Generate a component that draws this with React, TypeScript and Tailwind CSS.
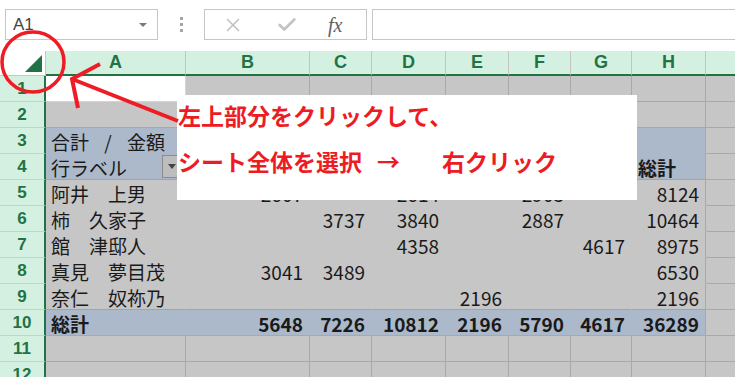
import { Check, X } from "lucide-react";

const colNames = ["A", "B", "C", "D", "E", "F", "G", "H", ""];
const colWidths = [
  "w-[140px]",
  "w-[124px]",
  "w-[62px]",
  "w-[74px]",
  "w-[63px]",
  "w-[62px]",
  "w-[61px]",
  "w-[74px]",
  "w-[80px]",
];

type Cell = string | number;

// pivot body: rows 5-9, then total row 10
const pivotRows: Cell[][] = [
  ["阿井　上男", 2607, "", 2614, "", 2903, "", 8124],
  ["柿　久家子", "", 3737, 3840, "", 2887, "", 10464],
  ["館　津邸人", "", "", 4358, "", "", 4617, 8975],
  ["真見　夢目茂", 3041, 3489, "", "", "", "", 6530],
  ["奈仁　奴祢乃", "", "", "", 2196, "", "", 2196],
];
const totalRow: Cell[] = ["総計", 5648, 7226, 10812, 2196, 5790, 4617, 36289];

const rowNumbers = [1, 2, 3, 4, 5, 6, 7, 8, 9, 10, 11, 12];

function cellStyle(row: number, col: number) {
  const inPivot = row >= 3 && row <= 10 && col <= 7;
  if (row === 1 && col === 0) return "bg-white border-[#d4d4d4]";
  if (!inPivot) return "bg-[#c6c6c6] border-[#a9a9a9]";
  const header = row === 3 || row === 4 || row === 10;
  let cls = header ? "bg-[#acb9ca] border-[#acb9ca]" : "bg-[#c6c6c6] border-[#c6c6c6]";
  if (col === 7) cls += " border-r-[#a9a9a9]";
  if (row === 4 || row === 9) cls += " border-b-[#8ea9c8]";
  if (row === 10) cls += " border-b-[#a9a9a9]";
  return cls;
}

function cellContent(row: number, col: number): { text: Cell; bold?: boolean } {
  if (row === 3 && col === 0) return { text: "合計 / 金額" };
  if (row === 4 && col === 0) return { text: "行ラベル" };
  if (row === 4 && col === 7) return { text: "総計", bold: true };
  if (row >= 5 && row <= 9 && col <= 7) return { text: pivotRows[row - 5][col] };
  if (row === 10 && col <= 7) return { text: totalRow[col], bold: true };
  return { text: "" };
}

function SheetRow({ row }: { row: number }) {
  return (
    <div className="flex h-[26px]">
      <div className="flex w-[46px] shrink-0 items-center justify-center border-r-2 border-b border-[#217346] border-b-[#c3d5ca] bg-[#d3f0e0] font-['Liberation_Sans',sans-serif] text-[17px] font-bold text-[#217346]">
        {row}
      </div>
      {colWidths.map((w, col) => {
        const { text, bold } = cellContent(row, col);
        const isNum = typeof text === "number";
        return (
          <div
            key={col}
            className={`relative flex shrink-0 items-center border-r border-b pt-[2px] ${w} ${cellStyle(row, col)} ${
              isNum ? "justify-end pr-[6px]" : col === 7 ? "pl-[6px]" : "pl-[5px]"
            } ${bold ? "font-bold" : "font-normal"} whitespace-pre text-[19px] leading-none text-[#1a1a1a]`}
          >
            {row === 3 && col === 0 ? <span className="[word-spacing:11px]">{text}</span> : text}
            {row === 4 && col === 0 && (
              <span className="absolute top-[1px] left-[116px] flex h-[23px] w-[19px] items-center justify-center border border-[#8c8c8c] bg-[#bdbdbd]">
                <span className="h-0 w-0 border-x-[4px] border-t-[5px] border-x-transparent border-t-[#444]" />
              </span>
            )}
          </div>
        );
      })}
    </div>
  );
}

export default function App() {
  return (
    <div className="relative h-[377px] w-[735px] overflow-hidden bg-white font-['Noto_Sans_CJK_JP',sans-serif]">
      {/* formula bar */}
      <div className="flex h-[51px] items-center pb-[2px] pl-[5px]">
        <div className="flex h-[31px] w-[153px] shrink-0 items-center justify-between border border-[#c6c6c6] pr-[10px] pl-[7px]">
          <span className="font-['Liberation_Sans',sans-serif] text-[17px] font-light text-[#444]">A1</span>
          <span className="h-0 w-0 border-x-[4px] border-t-[4px] border-x-transparent border-t-[#7a7a7a]" />
        </div>
        <div className="flex w-[46px] shrink-0 flex-col items-center gap-[3px]">
          <span className="h-[3px] w-[3px] bg-[#a6a6a6]" />
          <span className="h-[3px] w-[3px] bg-[#a6a6a6]" />
          <span className="h-[3px] w-[3px] bg-[#a6a6a6]" />
        </div>
        <div className="flex h-[31px] w-[163px] shrink-0 items-center border border-[#c6c6c6]">
          <X className="ml-[17px] text-[#bfbfbf]" size={22} strokeWidth={1.6} />
          <Check className="ml-[32px] text-[#c4c4c4]" size={22} strokeWidth={3} />
          <span className="ml-[30px] font-['Liberation_Serif',serif] text-[20px] text-[#606060] italic">
            fx
          </span>
        </div>
        <div className="ml-[5px] h-[31px] flex-1 border border-r-0 border-[#c6c6c6]" />
      </div>

      {/* column headers */}
      <div className="flex h-[25px]">
        <div className="w-[46px] shrink-0 border-r border-b border-[#c6c6c6] bg-white" />
        {colWidths.map((w, i) => (
          <div
            key={i}
            className={`flex shrink-0 items-center justify-center border-r border-b-2 border-[#c3c3c3] border-b-[#217346] bg-[#d3f0e0] font-['Liberation_Sans',sans-serif] text-[18px] font-bold text-[#217346] ${w}`}
          >
            {colNames[i]}
          </div>
        ))}
      </div>

      {/* rows */}
      {rowNumbers.map((r) => (
        <SheetRow key={r} row={r} />
      ))}

      {/* annotation */}
      <div className="absolute top-[95px] left-[177px] flex h-[105px] w-[460px] flex-col bg-white pt-[9px] pl-[1px] text-[23px] leading-[23px] font-bold text-[#ed1c24]">
        <div>左上部分をクリックして、</div>
        <div className="mt-[23px] flex">
          <span>シート全体を選択</span>
          <span className="ml-[15px]">→</span>
          <span className="ml-[42px]">右クリック</span>
        </div>
      </div>

      {/* corner triangle */}
      <svg className="absolute top-[55px] left-[25px]" width="18" height="18" viewBox="0 0 18 18">
        <polygon points="17,0 17,17 0,17" fill="#217346" />
      </svg>

      {/* red circle and arrow */}
      <svg className="pointer-events-none absolute top-0 left-0" width="735" height="377" viewBox="0 0 735 377">
        <ellipse cx="33" cy="62" rx="31" ry="30" fill="none" stroke="#ee1c24" strokeWidth="3.5" />
        <line x1="178" y1="121" x2="72" y2="79" stroke="#ee1c24" strokeWidth="4" />
        <polyline points="100,64 72,79 78,108" fill="none" stroke="#ee1c24" strokeWidth="4" />
      </svg>
    </div>
  );
}
